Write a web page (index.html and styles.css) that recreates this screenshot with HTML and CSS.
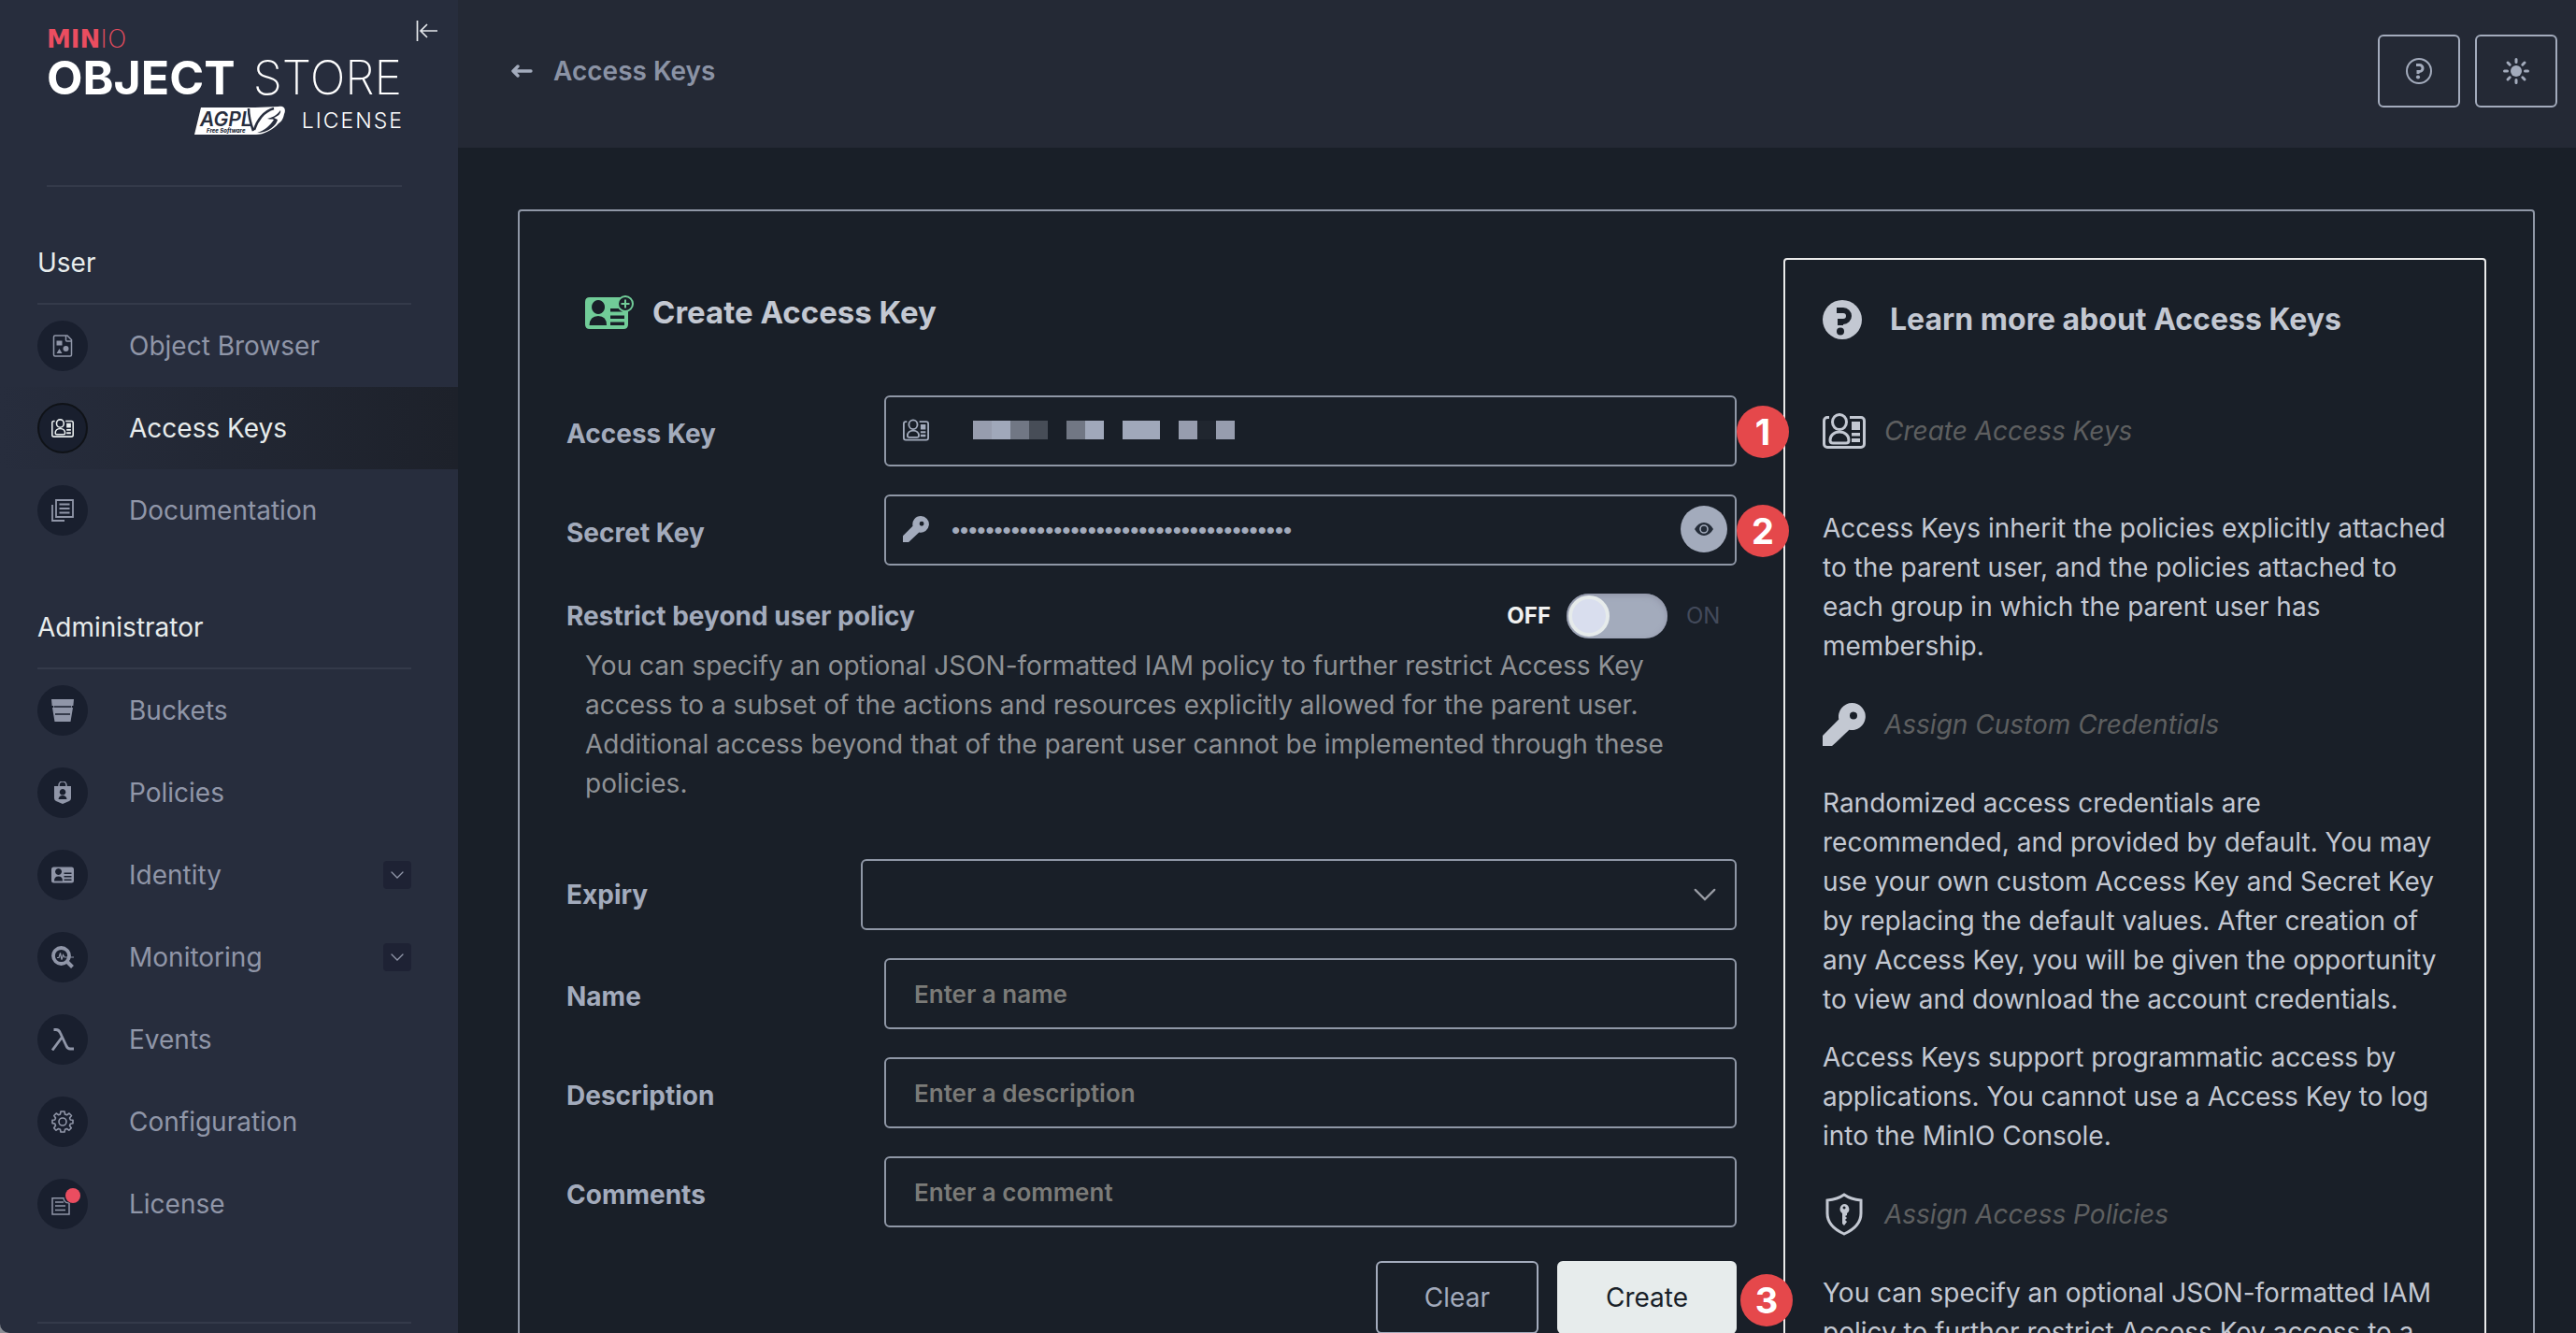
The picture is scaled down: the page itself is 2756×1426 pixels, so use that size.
FILE: index.html
```html
<!DOCTYPE html>
<html lang="en">
<head>
<meta charset="utf-8">
<title>MinIO Console - Create Access Key</title>
<link rel="stylesheet" href="styles.css">
</head>
<body>
<svg class="sprite" aria-hidden="true">
  <symbol id="i-idcard" viewBox="0 0 46 38">
    <g fill="none" stroke="currentColor" stroke-width="3">
      <path d="M7 4.500H5a3.500 3.500 0 0 0-3.500 3.500v25A3.500 3.500 0 0 0 5 36.500h36a3.500 3.500 0 0 0 3.500-3.500V8A3.500 3.500 0 0 0 41 4.500H29"/>
      <ellipse cx="18" cy="9.500" rx="7.500" ry="8"/>
      <path d="M18 20c-6 0-10 4-10 9 0 2 1 3 3 3h14c2 0 3-1 3-3 0-5-4-9-10-9z"/>
    </g>
    <path fill="currentColor" d="M31 9h9v9h-9zM31 21h9v3.500h-9zM31 27h9v4h-9z"/>
  </symbol>
  <symbol id="i-key" viewBox="0 0 46 46">
    <path fill="currentColor" fill-rule="evenodd" d="M31.500 0A14.500 14.500 0 0 0 17.300 17.600L0 35v11h10l4-3.600L28.400 28.700A14.500 14.500 0 1 0 31.500 0zm1.500 9.500a4 4 0 1 1 0 8 4 4 0 0 1 0-8z"/>
  </symbol>
  <symbol id="i-chevron" viewBox="0 0 14 8">
    <path d="M1 1l6 6 6-6" fill="none" stroke="currentColor" stroke-width="1.300" stroke-linecap="round"/>
  </symbol>
</svg>

<div class="shell">
  <aside class="sidebar">
    <div class="brand">
      <div class="brand-mark"><b>MIN</b><span>IO</span></div>
      <div class="brand-name"><b>OBJECT</b> <span>STORE</span></div>
      <div class="brand-license">
        <svg class="agpl" viewBox="0 0 97 33" aria-label="AGPL v3 Free Software" role="img">
          <path fill="#fff" d="M7 2h58l25-1c7-1 8 4 6 8-1 6-4 9-6 10-6 7-18 13-26 12H0z"/>
          <text x="6" y="22" font-size="21" font-style="italic" font-weight="600" fill="#272d3d">AGPL</text>
          <text x="13" y="29" font-size="6" font-weight="800" font-style="italic" fill="#272d3d">Free Software</text>
          <path fill="none" stroke="#272d3d" stroke-width="2.500" d="M58 3c0 8 2 16 5 24M64 26c3-10 10-20 21-23"/>
          <path fill="#272d3d" d="M92 5c-4 6-10 8-14 9 4 1 5 0 7 1-4 6-10 12-18 14 12 0 21-8 22-14l-4-2c5-2 8-5 7-8z"/>
        </svg>
        <span>LICENSE</span>
      </div>
      <button class="collapse" aria-label="Collapse menu">
        <svg viewBox="0 0 24 24"><path d="M1.500 1v22M23 12H6M12 5l-7 7 7 7" fill="none" stroke="currentColor" stroke-width="1.700"/></svg>
      </button>
    </div>

    <nav>
      <h2>User</h2>
      <ul>
        <li><a href="#"><span class="dot"><svg viewBox="0 0 24 24"><path d="M4.500 1h12.500l4.500 4.500V21.500a1.500 1.500 0 0 1-1.500 1.500H4a1.500 1.500 0 0 1-1.500-1.500v-19A1.500 1.500 0 0 1 4 1zM15.500 1v5q0 1 1 1h5" fill="none" stroke="currentColor" stroke-width="1.500"/><path fill="currentColor" d="M5.500 6.500h6v5h-6zM8.500 15l3 5h-6z"/><circle cx="15.500" cy="15" r="3" fill="currentColor"/></svg></span>Object Browser</a></li>
        <li><a href="#" class="active"><span class="dot"><svg><use href="#i-idcard"/></svg></span>Access Keys</a></li>
        <li><a href="#"><span class="dot"><svg viewBox="0 0 24 24"><path d="M5 1h18v18H5zM1 6v17h13" fill="none" stroke="currentColor" stroke-width="1.800"/><path d="M8.500 5.500h11M8.500 10h11M8.500 14.500h11" stroke="currentColor" stroke-width="1.800"/></svg></span>Documentation</a></li>
      </ul>
      <h2>Administrator</h2>
      <ul>
        <li><a href="#"><span class="dot"><svg viewBox="0 0 24 24"><path fill="currentColor" d="M0 0h24l-.6 7H22l-.2 2 1.200 0L20.500 24h-17L1 9l1.200 0L2 7H.6z"/><path d="M2.800 8h18.400M4 16h16" stroke="#191f2e" stroke-width="1.300"/></svg></span>Buckets</a></li>
        <li><a href="#"><span class="dot"><svg viewBox="0 0 24 24"><path d="M8 6V4a4 4 0 0 1 8 0v2" fill="none" stroke="currentColor" stroke-width="1.500"/><path fill="currentColor" fill-rule="evenodd" d="M3 5h18v13q0 2-2 3l-7 3-7-3q-2-1-2-3zM12 8a3.300 3.300 0 1 0 .1 0zM7.500 19q.5-4 4.500-4t4.500 4z"/></svg></span>Policies</a></li>
        <li><a href="#"><span class="dot"><svg viewBox="0 0 24 24"><path fill="currentColor" fill-rule="evenodd" d="M2.500 3.500h19Q24 3.500 24 6v12q0 2.500-2.500 2.500h-19Q0 20.500 0 18V6q0-2.500 2.500-2.500zM7.500 5a3.500 3.500 0 1 0 .1 0zM3 18.500h9q0-5-4.500-5T3 18.500zM13.500 9.500h8V11h-8zM13.500 13h8v1.500h-8zM13.500 16.500h8V18h-8z"/></svg></span>Identity<span class="expand"><svg><use href="#i-chevron"/></svg></span></a></li>
        <li><a href="#"><span class="dot"><svg viewBox="0 0 24 24"><circle cx="10.500" cy="10.500" r="8.500" fill="none" stroke="currentColor" stroke-width="3.800"/><path d="M17 17l5.500 5.500" stroke="currentColor" stroke-width="4"/><path d="M6 12.500h2l1.500-5 1.500 7 1.500-5 1.500 2.500H24" fill="none" stroke="currentColor" stroke-width="1.200"/></svg></span>Monitoring<span class="expand"><svg><use href="#i-chevron"/></svg></span></a></li>
        <li><a href="#"><span class="dot"><svg viewBox="0 0 24 24"><path d="M2.500 1.500H5Q8 1.500 9.500 5l6.500 14q1.500 3 4 3h4M11 10L1 23.500" fill="none" stroke="currentColor" stroke-width="2.800"/></svg></span>Events</a></li>
        <li><a href="#"><span class="dot"><svg viewBox="0 0 24 24"><g fill="none" stroke="currentColor" stroke-width="1.600" stroke-linejoin="round"><path d="M10 1h4l.5 3 2 .8L19 3l2.500 2.500L19.500 8l.8 2 2.700.3v3.500l-2.700.4-.8 2 1.800 2.500-2.500 2.500-2.300-1.700-2 .8-.5 2.700h-4l-.5-2.700-2-.8L5 21.200l-2.300-2.500L4.500 16l-.8-2-2.700-.4v-3.400L3.700 10l.8-2L2.800 5.500 5.200 3l2.300 1.700 2-.8z"/><circle cx="12" cy="12" r="4"/></g></svg></span>Configuration</a></li>
        <li><a href="#"><span class="dot alert"><svg viewBox="0 0 24 24"><path d="M13 5.800H1V23h18V11" fill="none" stroke="currentColor" stroke-width="1.500"/><path d="M4 10h9M4 14h11M4 18.500h11" stroke="currentColor" stroke-width="1.500"/><path d="M13 5q0 6 6 6" fill="none" stroke="currentColor" stroke-width="1.200"/></svg></span>License</a></li>
      </ul>
      <hr>
    </nav>
  </aside>

  <main>
    <header>
      <a href="#" class="back"><svg viewBox="0 0 24 14"><path d="M22 7H3M8 2L3 7l5 5" fill="none" stroke="currentColor" stroke-width="3.400" stroke-linecap="round" stroke-linejoin="round"/></svg>Access Keys</a>
      <div class="tools">
        <button aria-label="Help"><svg viewBox="0 0 28 28"><circle cx="14" cy="14" r="13" fill="none" stroke="currentColor" stroke-width="2"/><path d="M11 7.500h3.500a3.500 3.500 0 0 1 0 7H13V17" fill="none" stroke="currentColor" stroke-width="3"/><circle cx="13" cy="20.500" r="2.100" fill="currentColor"/></svg></button>
        <button aria-label="Switch theme"><svg viewBox="0 0 28 28"><circle cx="14" cy="14" r="6" fill="currentColor"/><path d="M14 1.500v3M14 23.500v3M1.500 14h3M23.500 14h3M5 5l2.200 2.200M20.800 20.800L23 23M5 23l2.200-2.200M20.800 7.200L23 5" stroke="currentColor" stroke-width="3" stroke-linecap="round"/></svg></button>
      </div>
    </header>

    <div class="card">
      <form>
        <h1><svg viewBox="0 0 52 36"><path fill="currentColor" fill-rule="evenodd" d="M5 2h36v6h5v23q0 5-5 5H5q-5 0-5-5V7q0-5 5-5zM14 5a7 7.500 0 1 0 .1 0zM4.500 32h18.500q0-10-9-10t-9.500 10zM27 14h13v3.500H27zM27 21.500h15V25H27zM27 28.500h15V32H27z"/><circle cx="43" cy="9" r="8" fill="#191f28" stroke="currentColor" stroke-width="2"/><path d="M43 4.500v9M38.500 9h9" stroke="currentColor" stroke-width="2"/></svg>Create Access Key</h1>

        <div class="field">
          <label for="access">Access Key</label>
          <div class="control">
            <input id="access" class="with-icon" type="text">
            <svg class="lead"><use href="#i-idcard"/></svg>
            <span class="redacted"><i class="a"></i><i class="b"></i><i class="c"></i><i class="d"></i><i></i><i class="c"></i><i class="b"></i><i></i><i class="b"></i><i class="b"></i><i></i><i class="a"></i><i class="e"></i><i class="a"></i></span>
            <span class="step">1</span>
          </div>
        </div>
        <div class="field">
          <label for="secret">Secret Key</label>
          <div class="control">
            <input id="secret" class="with-icon" type="password" value="abcdefghijklmnopqrstuvwxyzabcdefghijklmn">
            <svg class="lead"><use href="#i-key"/></svg>
            <button type="button" class="reveal" aria-label="Show secret key"><svg viewBox="0 0 20 14"><path fill="currentColor" d="M0 7q4-7 10-7t10 7q-4 7-10 7T0 7z"/><circle cx="10" cy="7" r="4" fill="none" stroke="#a3abbc" stroke-width="1.600"/></svg></button>
            <span class="step">2</span>
          </div>
        </div>

        <div class="policy">
          <div class="switch-row">
            <label for="restrict">Restrict beyond user policy</label>
            <span class="off">OFF</span>
            <input id="restrict" type="checkbox" class="switch">
            <span class="on">ON</span>
          </div>
          <p>You can specify an optional JSON-formatted IAM policy to further restrict Access Key access to a subset of the actions and resources explicitly allowed for the parent user. Additional access beyond that of the parent user cannot be implemented through these policies.</p>
        </div>

        <div class="field wide">
          <label for="expiry">Expiry</label>
          <div class="control">
            <select id="expiry"><option></option></select>
            <svg class="caret"><use href="#i-chevron"/></svg>
          </div>
        </div>
        <div class="field">
          <label for="name">Name</label>
          <div class="control"><input id="name" type="text" placeholder="Enter a name"></div>
        </div>
        <div class="field">
          <label for="description">Description</label>
          <div class="control"><input id="description" type="text" placeholder="Enter a description"></div>
        </div>
        <div class="field">
          <label for="comments">Comments</label>
          <div class="control"><input id="comments" type="text" placeholder="Enter a comment"></div>
        </div>
        <div class="actions">
          <button type="reset">Clear</button>
          <button type="submit" class="primary">Create</button>
          <span class="step last">3</span>
        </div>
      </form>

      <section class="help">
        <h2><svg viewBox="0 0 42 42"><circle cx="21" cy="21" r="21" fill="currentColor"/><path d="M15 11h7a6 6 0 0 1 0 12h-3v4" fill="none" stroke="#191f28" stroke-width="6"/><circle cx="19" cy="33.500" r="4" fill="#191f28"/></svg>Learn more about Access Keys</h2>
        <h3><svg><use href="#i-idcard"/></svg>Create Access Keys</h3>
        <p>Access Keys inherit the policies explicitly attached to the parent user, and the policies attached to each group in which the parent user has membership.</p>
        <h3><svg><use href="#i-key"/></svg>Assign Custom Credentials</h3>
        <p>Randomized access credentials are recommended, and provided by default. You may use your own custom Access Key and Secret Key by replacing the default values. After creation of any Access Key, you will be given the opportunity to view and download the account credentials.</p>
        <p class="next">Access Keys support programmatic access by applications. You cannot use a Access Key to log into the MinIO Console.</p>
        <h3><svg viewBox="0 0 46 46"><path d="M23 2q-7 5-18 6v14q0 14 18 22 18-8 18-22V8Q30 7 23 2z" fill="none" stroke="currentColor" stroke-width="3"/><path fill="currentColor" fill-rule="evenodd" d="M23 12a5.500 5.500 0 0 1 3 10v2l-2 1 2 2-2 2 2 2-3 4-2-2V22a5.500 5.500 0 0 1 2-10zm0 2.500a1.500 1.500 0 1 0 .1 0z"/></svg>Assign Access Policies</h3>
        <p>You can specify an optional JSON-formatted IAM policy to further restrict Access Key access to a subset of the actions and resources explicitly allowed for the parent user.</p>
      </section>
    </div>
  </main>
</div>
</body>
</html>
```

FILE: styles.css
```css
*, *::before, *::after { box-sizing: border-box; }

body {
  margin: 0;
  background: #8a8d94;
  color: #c3c8d2;
  font: 400 28px/42px Inter, sans-serif;
}

h1, h2, h3, p, ul { margin: 0; padding: 0; }
ul { list-style: none; }
a { color: inherit; text-decoration: none; }
button, input, select { font: inherit; color: inherit; }
.sprite { position: absolute; width: 0; height: 0; }

.shell {
  display: grid;
  grid-template-columns: 490px 1fr;
  height: 100vh;
  overflow: hidden;
  border-bottom-left-radius: 10px;
}

/* Sidebar */
.sidebar { background: #272d3d; overflow: hidden; }

.brand {
  position: relative;
  height: 200px;
  margin: 0 60px 0 50px;
  padding-top: 30px;
  border-bottom: 2px solid #343a4a;
  color: #fff;
}
.brand-mark {
  font: 200 26px/24px "DejaVu Sans", sans-serif;
  color: #eb4d60;
}
.brand-mark b, .brand-name b { font-weight: 700; }
.brand-name {
  display: flex;
  justify-content: space-between;
  font-size: 50px;
  font-weight: 200;
  line-height: 58px;
}
.brand-license {
  display: flex;
  justify-content: flex-end;
  align-items: center;
  gap: 18px;
  margin-right: -2px;
  font-size: 23px;
  font-weight: 300;
  line-height: 34px;
  letter-spacing: 2px;
}
.agpl { width: 97px; height: 33px; letter-spacing: 0; }
.collapse {
  position: absolute;
  top: 21px;
  right: -39px;
  display: flex;
  padding: 0;
  border: 0;
  background: none;
  color: #e5e8ec;
}
.collapse svg { width: 24px; height: 24px; }

nav h2 {
  margin: 60px 50px 0 40px;
  padding-bottom: 22px;
  border-bottom: 2px solid #343a4a;
  color: #e7ecec;
  font-size: 28px;
  font-weight: 400;
}
nav a {
  display: flex;
  align-items: center;
  gap: 44px;
  height: 88px;
  padding: 0 50px 0 40px;
  color: #9096a8;
}
nav .active {
  background: linear-gradient(90deg, #272d3d, #1d212a);
  color: #e7ecec;
}
.dot {
  position: relative;
  display: grid;
  place-items: center;
  width: 54px;
  height: 54px;
  border-radius: 50%;
  background: #191f2e;
}
.active .dot { border: 2px solid #0f1217; }
.dot svg { width: 24px; height: 24px; }
.alert::after {
  content: "";
  position: absolute;
  top: 10px;
  right: 8px;
  width: 16px;
  height: 16px;
  border-radius: 50%;
  background: #eb4d60;
}
.expand {
  display: grid;
  place-items: center;
  width: 30px;
  height: 30px;
  margin-left: auto;
  border-radius: 4px;
  background: #1e2234;
}
.expand svg { width: 14px; height: 8px; }
nav hr {
  margin: 82px 50px 0 40px;
  border: 0;
  border-top: 2px solid #343a4a;
}

/* Header */
main { background: #191f28; overflow: hidden; }
header {
  display: flex;
  justify-content: space-between;
  align-items: center;
  height: 158px;
  padding: 0 20px 6px 56px;
  background: #242935;
  color: #a3abbc;
}
.back {
  display: flex;
  align-items: center;
  gap: 22px;
  color: #8b93a5;
  font-weight: 600;
}
.back svg { width: 24px; height: 14px; color: #a3abbc; }
.tools { display: flex; gap: 16px; }
.tools button {
  display: grid;
  place-items: center;
  width: 88px;
  height: 78px;
  border: 2px solid #a3abbc;
  border-radius: 6px;
  background: none;
}
.tools svg { width: 28px; height: 28px; }

/* Card */
.card {
  display: grid;
  grid-template-columns: 5fr 3fr;
  align-items: start;
  gap: 50px;
  margin: 66px 44px 66px 64px;
  padding: 50px;
  border: 2px solid #8f97a6;
  border-radius: 4px;
}
@media (min-width: 1800px) {
  .card { grid-template-columns: 1fr 752px; }
}

form { color: #a3abbc; }
h1 {
  display: flex;
  align-items: center;
  gap: 20px;
  margin: 37px 20px 68px;
  color: #c3c8d2;
  font-size: 33px;
  font-weight: 700;
}
h1 svg { width: 52px; height: 36px; color: #71cc98; }

.field {
  display: grid;
  grid-template-columns: 340px 1fr;
  align-items: center;
  margin-bottom: 30px;
}
.field.wide { grid-template-columns: 315px 1fr; }
.field label, .switch-row label { font-weight: 700; }
.field label { padding-top: 6px; }
.field.wide label { padding-top: 0; }
.control { position: relative; }
.control input, .control select {
  display: block;
  width: 100%;
  height: 76px;
  padding: 0 30px;
  border: 2px solid #8f97a6;
  border-radius: 6px;
  background: transparent;
  appearance: none;
  font-size: 26px;
  font-weight: 600;
}
.control .with-icon { padding-left: 70px; }
.control input[type="password"] {
  font-family: "Liberation Sans", Arial, sans-serif;
  font-weight: 400;
}
.control input::placeholder { color: #7b7b78; }
.lead {
  position: absolute;
  top: 23px;
  left: 20px;
  width: 28px;
  height: 28px;
}
.caret {
  position: absolute;
  top: 31px;
  right: 22px;
  width: 24px;
  height: 14px;
  color: #999ca4;
}
.redacted {
  position: absolute;
  top: 27px;
  left: 95px;
  display: flex;
}
.redacted i { width: 20px; height: 20px; }
.redacted .a { background: #979dae; }
.redacted .b { background: #a0a8ba; }
.redacted .c { background: #717784; }
.redacted .d { background: #474d57; }
.redacted .e { background: #20262f; }
.reveal {
  position: absolute;
  top: 12px;
  right: 10px;
  display: grid;
  place-items: center;
  width: 50px;
  height: 50px;
  padding: 0;
  border: 0;
  border-radius: 50%;
  background: #a3abbc;
  color: #242c38;
}
.reveal svg { width: 20px; height: 14px; }
.step {
  position: absolute;
  z-index: 1;
  top: 11px;
  right: -56px;
  width: 56px;
  height: 56px;
  border-radius: 50%;
  background: #e5484b;
  color: #fff;
  font-size: 38px;
  font-weight: 700;
  line-height: 56px;
  text-align: center;
}
.step.last { top: 14px; right: -60px; }

.policy { margin-bottom: 60px; }
.switch-row { display: flex; align-items: center; height: 48px; }
.switch-row label { margin-right: auto; }
.off, .on { font-size: 24px; }
.off { color: #f1f1f1; font-weight: 700; }
.on { width: 54px; color: #434a5b; }
.switch {
  display: flex;
  width: 108px;
  height: 48px;
  margin: 0 20px 0 17px;
  padding: 2px;
  border-radius: 24px;
  background: #a3abbc;
  box-shadow: inset 0 2px 6px #8f93a6;
  appearance: none;
}
.switch::before {
  content: "";
  width: 44px;
  height: 44px;
  border: 4px solid #e6ebeb;
  border-radius: 50%;
  background: #d9deee;
}
.policy p { padding: 8px 20px 0; color: #8f9296; }

.actions {
  position: relative;
  display: flex;
  justify-content: flex-end;
  gap: 20px;
  margin-top: 36px;
}
.actions button {
  height: 78px;
  padding: 0 50px;
  border: 2px solid #a3abbc;
  border-radius: 6px;
  background: none;
}
.actions .primary { border-color: #e7ecec; background: #e7ecec; color: #191f28; }

/* Help panel */
.help {
  padding: 40px 38px 40px 40px;
  border: 2px solid #eaeaea;
  border-radius: 4px;
}
.help h2 {
  display: flex;
  align-items: center;
  gap: 30px;
  height: 48px;
  margin-bottom: 72px;
  font-size: 32px;
  font-weight: 700;
}
.help h2 svg { width: 42px; height: 42px; }
.help h3 {
  display: flex;
  align-items: center;
  gap: 20px;
  margin: 40px 0;
  color: #5e5f60;
  font-size: 28px;
  font-style: italic;
  font-weight: 400;
}
.help h3 svg { width: 46px; height: 46px; color: #c3c8d2; }
.help h2 + h3 { margin-bottom: 60px; }
.help .next { margin-top: 20px; }
```
